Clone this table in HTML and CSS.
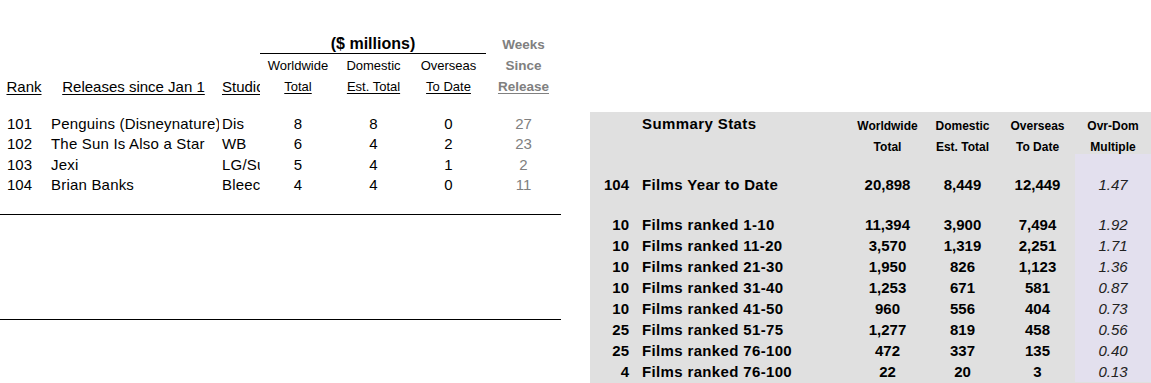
FILE: index.html
```html
<!DOCTYPE html>
<html>
<head>
<meta charset="utf-8">
<link rel="stylesheet" href="styles.css">
</head>
<body>
<div class="page">
  <section class="left">
    <div class="lrow hrow">
      <div class="cell"></div><div class="cell"></div><div class="cell"></div>
      <div class="cell money">($ millions)</div>
      <div class="cell wk">Weeks</div>
    </div>
    <div class="lrow hrow">
      <div class="cell"></div><div class="cell"></div><div class="cell"></div>
      <div class="cell sub">Worldwide</div>
      <div class="cell sub">Domestic</div>
      <div class="cell sub">Overseas</div>
      <div class="cell wk">Since</div>
    </div>
    <div class="lrow hrow">
      <div class="cell ctr big"><span class="ul">Rank</span></div>
      <div class="cell ctr big"><span class="ul">Releases since Jan 1</span></div>
      <div class="cell lft big clip"><span class="ul">Studio</span></div>
      <div class="cell sub"><span class="ul">Total</span></div>
      <div class="cell sub"><span class="ul">Est. Total</span></div>
      <div class="cell sub"><span class="ul">To Date</span></div>
      <div class="cell wk"><span class="ul">Release</span></div>
    </div>

    <div class="data">
      <div class="lrow drow">
        <div class="cell rank">101</div>
        <div class="cell lft clip">Penguins (Disneynature)</div>
        <div class="cell lft clip">Dis</div>
        <div class="cell num">8</div><div class="cell num">8</div><div class="cell num">0</div>
        <div class="cell num gray">27</div>
      </div>
      <div class="lrow drow">
        <div class="cell rank">102</div>
        <div class="cell lft clip">The Sun Is Also a Star</div>
        <div class="cell lft clip">WB</div>
        <div class="cell num">6</div><div class="cell num">4</div><div class="cell num">2</div>
        <div class="cell num gray">23</div>
      </div>
      <div class="lrow drow">
        <div class="cell rank">103</div>
        <div class="cell lft clip">Jexi</div>
        <div class="cell lft clip">LG/Summit</div>
        <div class="cell num">5</div><div class="cell num">4</div><div class="cell num">1</div>
        <div class="cell num gray">2</div>
      </div>
      <div class="lrow drow">
        <div class="cell rank">104</div>
        <div class="cell lft clip">Brian Banks</div>
        <div class="cell lft clip">Bleecker Street</div>
        <div class="cell num">4</div><div class="cell num">4</div><div class="cell num">0</div>
        <div class="cell num gray">11</div>
      </div>
    </div>
    <div class="rule rule1"></div>
    <div class="rule rule2"></div>
  </section>

  <section class="right">
    <div class="rrow r21">
      <div class="cell"></div>
      <div class="cell title">Summary Stats</div>
      <div class="cell hd">Worldwide</div>
      <div class="cell hd">Domestic</div>
      <div class="cell hd">Overseas</div>
      <div class="cell hd">Ovr-Dom</div>
    </div>
    <div class="rrow r21">
      <div class="cell"></div>
      <div class="cell"></div>
      <div class="cell hd">Total</div>
      <div class="cell hd">Est. Total</div>
      <div class="cell hd">To Date</div>
      <div class="cell hd">Multiple</div>
    </div>
    <div class="rrow gap">
      <div class="cell"></div><div class="cell"></div><div class="cell"></div><div class="cell"></div><div class="cell"></div>
      <div class="cell lav"></div>
    </div>
    <div class="rrow r21">
      <div class="cell cnt">104</div>
      <div class="cell lab">Films Year to Date</div>
      <div class="cell val">20,898</div>
      <div class="cell val">8,449</div>
      <div class="cell val">12,449</div>
      <div class="cell lav mult">1.47</div>
    </div>
    <div class="rrow gap">
      <div class="cell"></div><div class="cell"></div><div class="cell"></div><div class="cell"></div><div class="cell"></div>
      <div class="cell lav"></div>
    </div>
    <div class="rrow r21">
      <div class="cell cnt">10</div><div class="cell lab">Films ranked 1-10</div>
      <div class="cell val">11,394</div><div class="cell val">3,900</div><div class="cell val">7,494</div>
      <div class="cell lav mult">1.92</div>
    </div>
    <div class="rrow r21">
      <div class="cell cnt">10</div><div class="cell lab">Films ranked 11-20</div>
      <div class="cell val">3,570</div><div class="cell val">1,319</div><div class="cell val">2,251</div>
      <div class="cell lav mult">1.71</div>
    </div>
    <div class="rrow r21">
      <div class="cell cnt">10</div><div class="cell lab">Films ranked 21-30</div>
      <div class="cell val">1,950</div><div class="cell val">826</div><div class="cell val">1,123</div>
      <div class="cell lav mult">1.36</div>
    </div>
    <div class="rrow r21">
      <div class="cell cnt">10</div><div class="cell lab">Films ranked 31-40</div>
      <div class="cell val">1,253</div><div class="cell val">671</div><div class="cell val">581</div>
      <div class="cell lav mult">0.87</div>
    </div>
    <div class="rrow r21">
      <div class="cell cnt">10</div><div class="cell lab">Films ranked 41-50</div>
      <div class="cell val">960</div><div class="cell val">556</div><div class="cell val">404</div>
      <div class="cell lav mult">0.73</div>
    </div>
    <div class="rrow r21">
      <div class="cell cnt">25</div><div class="cell lab">Films ranked 51-75</div>
      <div class="cell val">1,277</div><div class="cell val">819</div><div class="cell val">458</div>
      <div class="cell lav mult">0.56</div>
    </div>
    <div class="rrow r21">
      <div class="cell cnt">25</div><div class="cell lab">Films ranked 76-100</div>
      <div class="cell val">472</div><div class="cell val">337</div><div class="cell val">135</div>
      <div class="cell lav mult">0.40</div>
    </div>
    <div class="rrow r21">
      <div class="cell cnt">4</div><div class="cell lab">Films ranked 76-100</div>
      <div class="cell val">22</div><div class="cell val">20</div><div class="cell val">3</div>
      <div class="cell lav mult">0.13</div>
    </div>
  </section>
</div>
</body>
</html>
```

FILE: styles.css
```css
html, body {
  margin: 0;
  padding: 0;
  background: #ffffff;
}
body {
  font-family: "Liberation Sans", Arial, sans-serif;
  color: #000;
  width: 1151px;
  height: 383px;
  overflow: hidden;
}
.page {
  display: flex;
  align-items: flex-start;
}
.cell {
  white-space: nowrap;
  min-width: 0;
}
.clip { overflow: hidden; }

/* ---------- left table ---------- */
.left {
  width: 561px;
  padding-top: 34px;
}
.lrow {
  display: grid;
  grid-template-columns: 48px 171px 41px 76px 75px 75px 75px;
}
.hrow {
  height: 21px;
  line-height: 21px;
}
.money {
  grid-column: 4 / span 3;
  text-align: center;
  font-weight: bold;
  font-size: 16px;
  line-height: 19px;
  height: 19px;
  border-bottom: 1px solid #000;
}
.wk {
  grid-column: 7;
  text-align: center;
  font-weight: bold;
  font-size: 13.5px;
  color: #808080;
}
.sub {
  text-align: center;
  font-size: 13px;
}
.big { font-size: 15px; }
.ctr { text-align: center; }
.lft { text-align: left; padding-left: 3px; }
.ul {
  text-decoration: underline;
  text-underline-offset: 2px;
}
.data {
  margin-top: 16.5px;
}
.drow {
  height: 20.5px;
  line-height: 20.5px;
  font-size: 15px;
}
.drow .lft { letter-spacing: 0.2px; }
.rank { padding-left: 7px; }
.num { text-align: center; }
.gray { color: #808080; }
.rule {
  width: 561px;
  border-top: 1px solid #000;
}
.rule1 { margin-top: 18.5px; }
.rule2 { margin-top: 104px; }

/* ---------- right summary ---------- */
.right {
  width: 561px;
  height: 271px;
  margin-top: 112px;
  margin-left: 29px;
  background: #e0e0e0;
}
.rrow {
  display: grid;
  grid-template-columns: 44px 216px 75px 75px 75px 76px;
}
.r21 { height: 21px; line-height: 21px; }
.gap { height: 19.5px; }
.title {
  font-weight: bold;
  font-size: 15px;
  letter-spacing: 0.4px;
  padding-left: 8px;
  line-height: 23px;
}
.hd {
  text-align: center;
  font-weight: bold;
  font-size: 12px;
  padding-top: 8px;
  line-height: 13px;
}
.cnt {
  text-align: right;
  padding-right: 5px;
  font-weight: bold;
  font-size: 15px;
}
.lab {
  padding-left: 8px;
  font-weight: bold;
  font-size: 15px;
  letter-spacing: 0.35px;
}
.val {
  text-align: center;
  font-weight: bold;
  font-size: 15px;
}
.lav { background: #e3e0ee; }
.mult {
  text-align: center;
  font-style: italic;
  font-size: 15px;
  color: #222;
}
```
